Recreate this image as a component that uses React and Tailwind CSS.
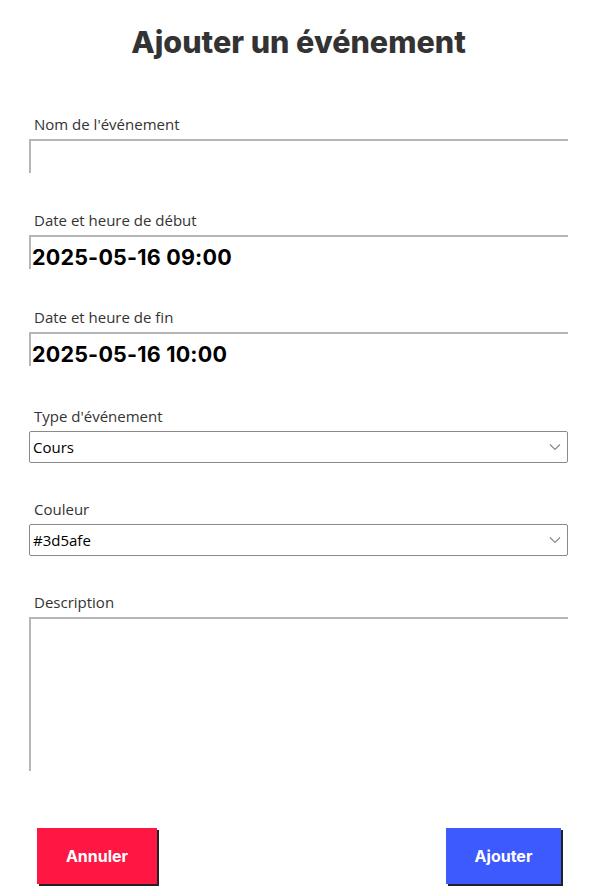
import React from 'react';

const labelCls = "block text-[15px] leading-[22px] text-[#333] mb-[4px] pl-[5px]";
const geo = { fontFamily: 'Inter, "Noto Sans", sans-serif' };

const TextField = ({ label, value, mb = 'mb-[36px]' }) => (
  <div className={mb}>
    <label className={labelCls}>{label}</label>
    <div className="w-[539px] h-[34px] border-t-2 border-l-2 border-[#b5b5b5] flex items-start pt-[8px] pl-[1px]">
      {value && (
        <span className="text-[21.5px] leading-[24px] font-bold text-black tracking-[0.2px]" style={geo}>{value}</span>
      )}
    </div>
  </div>
);

const SelectField = ({ label, value, mb }) => (
  <div className={mb}>
    <label className={labelCls}>{label}</label>
    <div className="w-[539px] h-[32px] border border-[#8a8a8a] rounded-[2px] flex items-center justify-between pl-[3px] pr-[6px]">
      <span className="text-[15px] text-black">{value}</span>
      <svg width="12" height="8" viewBox="0 0 12 8" fill="none" stroke="#8a8a8a" strokeWidth="1.2">
        <path d="M1 1.5 L6 6.5 L11 1.5" />
      </svg>
    </div>
  </div>
);

export default function App() {
  return (
    <div className="min-h-screen bg-white px-[29px]" style={{ fontFamily: '"Open Sans", "Noto Sans", sans-serif' }}>
      <h1 className="text-center text-[30.5px] font-extrabold text-[#333] pt-[24px] pb-[53px] leading-[36px]" style={geo}>
        Ajouter un événement
      </h1>

      <TextField label="Nom de l'événement" mb="mb-[36px]" />
      <TextField label="Date et heure de début" value="2025-05-16 09:00" mb="mb-[37px]" />
      <TextField label="Date et heure de fin" value="2025-05-16 10:00" mb="mb-[39px]" />
      <SelectField label="Type d'événement" value="Cours" mb="mb-[35px]" />
      <SelectField label="Couleur" value="#3d5afe" mb="mb-[35px]" />

      <div>
        <label className={labelCls}>Description</label>
        <div className="w-[539px] h-[154px] border-t-2 border-l-2 border-[#b5b5b5]"></div>
      </div>

      <div className="flex justify-between items-center mt-[57px] pl-[8px] pr-[7px]" style={geo}>
        <button className="w-[120px] h-[56px] bg-[#ff1744] text-white font-bold text-[16px] shadow-[2px_2px_0_#222]">
          Annuler
        </button>
        <button className="w-[115px] h-[56px] bg-[#3d5afe] text-white font-bold text-[16px] shadow-[2px_2px_0_#222]">
          Ajouter
        </button>
      </div>
    </div>
  );
}
